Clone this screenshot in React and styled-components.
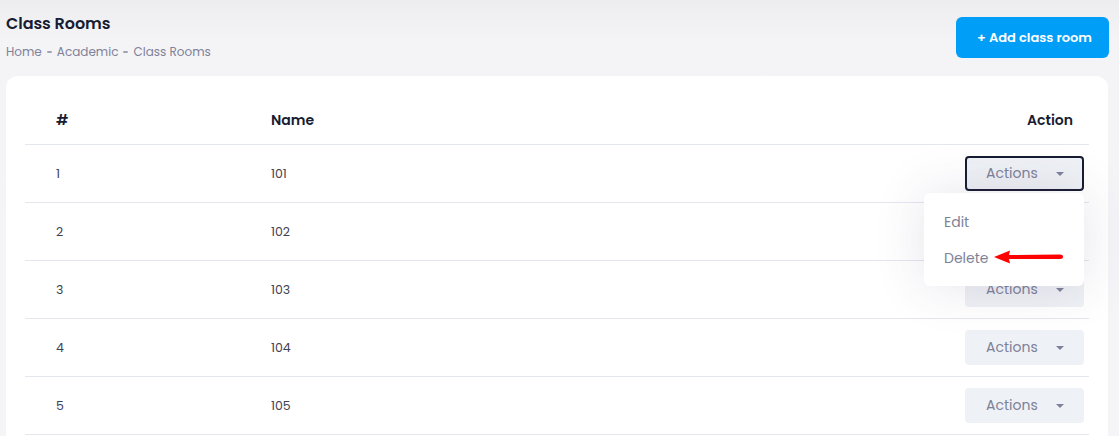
import React from "react";
import styled, { createGlobalStyle } from "styled-components";

const Global = createGlobalStyle`
  html, body { margin: 0; padding: 0; }
  body {
    background: linear-gradient(180deg, #ededf0 0px, #f4f4f7 40px, #f5f5f8 100%);
    font-family: "Poppins", "Inter", "Noto Sans", sans-serif;
    width: 1119px;
    height: 436px;
    overflow: hidden;
  }
`;

const Page = styled.div`
  padding: 0 11px 0 6px;
`;

const Header = styled.div`
  display: flex;
  justify-content: space-between;
  align-items: flex-start;
  padding-top: 13px;
  height: 76px;
  box-sizing: border-box;
`;

const TitleBlock = styled.div`
  display: flex;
  flex-direction: column;
  gap: 8px;
`;

const Title = styled.h1`
  margin: 0;
  font-size: 16px;
  font-weight: 600;
  color: #181c32;
  line-height: 22px;
  letter-spacing: -0.05px;
`;

const Crumbs = styled.div`
  display: flex;
  align-items: center;
  gap: 5px;
  font-size: 12px;
  color: #7e8299;
  line-height: 18px;
`;

const Sep = styled.span`
  display: inline-block;
  width: 5px;
  height: 2px;
  background: #a1a5b7;
  border-radius: 1px;
`;

const AddButton = styled.button`
  margin-top: 4px;
  margin-right: -1px;
  width: 153px;
  height: 41px;
  border: 0;
  border-radius: 6px;
  background: #009ef7;
  color: #fff;
  font-family: inherit;
  font-size: 13px;
  font-weight: 600;
  padding: 0 0 0 4px;
  cursor: pointer;
`;

const Card = styled.div`
  background: #fff;
  border-radius: 12px 12px 0 0;
  padding: 20px 19px 0;
  height: 360px;
  box-sizing: border-box;
`;

const Row = styled.div`
  display: grid;
  grid-template-columns: 215px 1fr auto;
  align-items: center;
  padding-left: 31px;
  height: ${(p) => (p.$head ? "48px" : "57px")};
  border-bottom: 1px solid #e4e6ef;
  font-size: ${(p) => (p.$head ? "14px" : "12.5px")};
  font-weight: ${(p) => (p.$head ? 600 : 400)};
  color: ${(p) => (p.$head ? "#181c32" : "#3f4254")};
`;

const Cell = styled.div`
  text-align: ${(p) => (p.$right ? "right" : "left")};
  padding-right: ${(p) => (p.$pad ? `${p.$pad}px` : "0")};
`;

const ActionWrap = styled.div`
  position: relative;
`;

const ActionsButton = styled.button`
  width: 119px;
  height: 35px;
  box-sizing: border-box;
  border: 2px solid ${(p) => (p.$focused ? "#181c32" : "transparent")};
  border-radius: 4px;
  background: #eef1f5;
  color: #7e8299;
  font-family: inherit;
  font-size: 14px;
  display: flex;
  align-items: center;
  padding: 0 0 0 19px;
  gap: 18px;
  cursor: pointer;
`;

const Caret = styled.span`
  width: 0;
  height: 0;
  border-left: 4px solid transparent;
  border-right: 4px solid transparent;
  border-top: 4px solid #7e8299;
`;

const Menu = styled.div`
  position: absolute;
  top: 37px;
  right: 0;
  width: 160px;
  box-sizing: border-box;
  padding: 11px 0 10px;
  background: #fff;
  border-radius: 6px;
  box-shadow: 0 0 50px 0 rgba(82, 63, 105, 0.15);
  z-index: 5;
  text-align: left;
`;

const MenuItem = styled.div`
  position: relative;
  height: 36px;
  display: flex;
  align-items: center;
  padding-left: 20px;
  font-size: 14px;
  color: #7e8299;
`;

const Arrow = styled.svg`
  position: absolute;
  left: 70px;
  top: 10px;
`;

const rows = ["101", "102", "103", "104", "105"];

export default function App() {
  return (
    <>
      <Global />
      <Page>
        <Header>
          <TitleBlock>
            <Title>Class Rooms</Title>
            <Crumbs>
              <span>Home</span>
              <Sep />
              <span>Academic</span>
              <Sep />
              <span>Class Rooms</span>
            </Crumbs>
          </TitleBlock>
          <AddButton>+ Add class room</AddButton>
        </Header>
        <Card>
          <Row $head>
            <Cell>#</Cell>
            <Cell>Name</Cell>
            <Cell $right $pad={16}>Action</Cell>
          </Row>
          {rows.map((name, i) => (
            <Row key={name}>
              <Cell>{i + 1}</Cell>
              <Cell>{name}</Cell>
              <Cell $pad={5}>
                <ActionWrap>
                  <ActionsButton $focused={i === 0}>
                    Actions <Caret />
                  </ActionsButton>
                  {i === 0 && (
                    <Menu>
                      <MenuItem>Edit</MenuItem>
                      <MenuItem>
                        Delete
                        <Arrow width="72" height="14" viewBox="0 0 72 14">
                          <path d="M0 7 L16 0.5 L15 5 L66 4.5 Q69 4.5 69 6.8 Q69 9 66 9 L15 9 L16 13.5 Z" fill="#f00" />
                        </Arrow>
                      </MenuItem>
                    </Menu>
                  )}
                </ActionWrap>
              </Cell>
            </Row>
          ))}
        </Card>
      </Page>
    </>
  );
}
